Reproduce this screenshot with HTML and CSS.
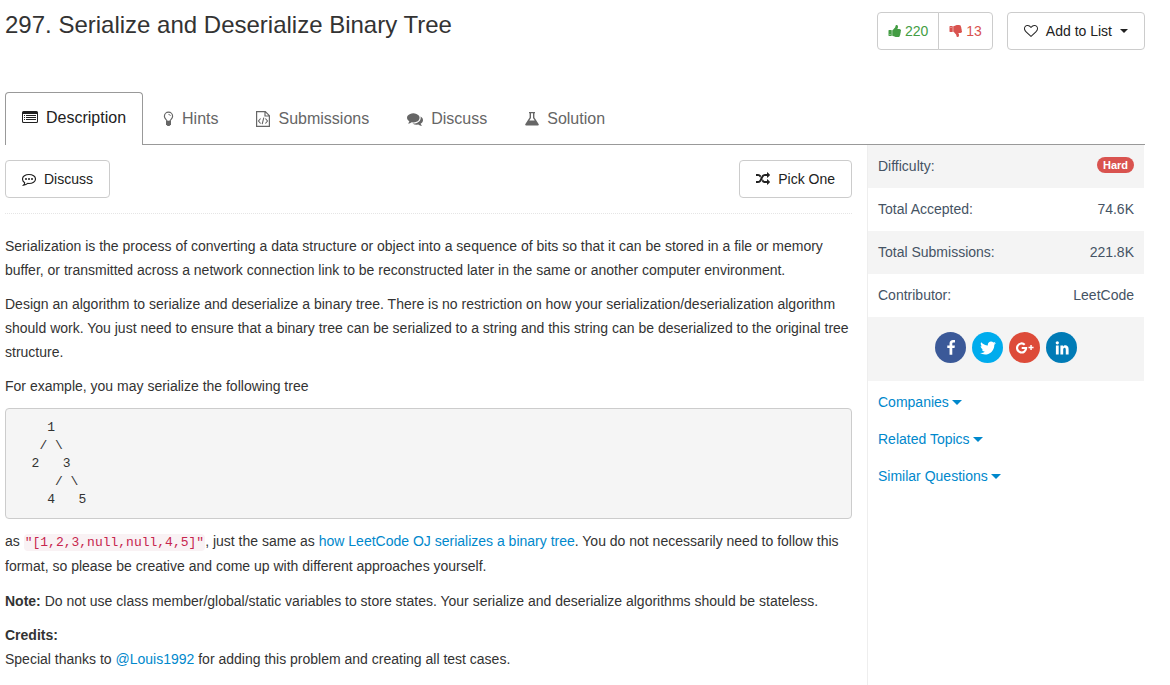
FILE: index.html
```html
<!DOCTYPE html>
<html lang="en">
<head>
<meta charset="utf-8">
<title>297. Serialize and Deserialize Binary Tree</title>
<link rel="stylesheet" href="styles.css">
</head>
<body>
<div class="page">
  <header class="header">
    <h1 class="title">297. Serialize and Deserialize Binary Tree</h1>
    <div class="actions">
      <div class="votes">
        <button type="button" class="vote vote-up"><svg class="thumb" viewBox="0 0 1792 1792"><path d="M320 1344q0-26-19-45t-45-19q-27 0-45.500 19t-18.500 45q0 27 18.500 45.500t45.500 18.500q26 0 45-18.500t19-45.500zm160-512v640q0 26-19 45t-45 19h-288q-26 0-45-19t-19-45v-640q0-26 19-45t45-19h288q26 0 45 19t19 45zm1184 0q0 86-55 149 15 44 15 76 3 76-43 137 17 56 0 117-15 57-54 94 9 112-49 181-64 76-197 78h-129q-66 0-144-15.500t-121.500-29-120.500-39.500q-123-43-158-44-26-1-45-19.500t-19-44.500v-641q0-25 18-43.500t43-20.500q24-2 76-59t101-121q68-87 101-120 18-18 31-48t17.500-48.500 13.500-60.500q7-39 12.500-61t19.500-52 34-50q19-19 45-19 46 0 82.500 10.500t60 26 40 40.500 24 45 12 50 5 45 .5 39q0 38-9.500 76t-19 60-27.500 56q-3 6-10 18t-11 22-8 24h277q78 0 135 57t57 135z"/></svg><span>220</span></button>
        <button type="button" class="vote vote-down"><svg class="thumb" viewBox="0 0 1792 1792"><path transform="matrix(1 0 0 -1 0 1792)" d="M320 1344q0-26-19-45t-45-19q-27 0-45.500 19t-18.500 45q0 27 18.500 45.500t45.500 18.500q26 0 45-18.500t19-45.500zm160-512v640q0 26-19 45t-45 19h-288q-26 0-45-19t-19-45v-640q0-26 19-45t45-19h288q26 0 45 19t19 45zm1184 0q0 86-55 149 15 44 15 76 3 76-43 137 17 56 0 117-15 57-54 94 9 112-49 181-64 76-197 78h-129q-66 0-144-15.500t-121.500-29-120.500-39.500q-123-43-158-44-26-1-45-19.500t-19-44.500v-641q0-25 18-43.500t43-20.500q24-2 76-59t101-121q68-87 101-120 18-18 31-48t17.500-48.500 13.500-60.500q7-39 12.500-61t19.500-52 34-50q19-19 45-19 46 0 82.500 10.500t60 26 40 40.500 24 45 12 50 5 45 .5 39q0 38-9.500 76t-19 60-27.500 56q-3 6-10 18t-11 22-8 24h277q78 0 135 57t57 135z"/></svg><span>13</span></button>
      </div>
      <button type="button" class="btn"><svg class="icon-sm" viewBox="0 0 1792 1792"><path d="M1664 596q0-81-21.500-143t-55-98.500-81.500-59.500-94-31-98-8-112 25.500-110.500 64-86.500 72-60 61.500q-18 22-49 22t-49-22q-24-28-60-61.500t-86.500-72-110.500-64-112-25.500-98 8-94 31-81.500 59.500-55 98.500-21.500 143q0 168 187 355l581 560 580-559q188-188 188-356zm128 0q0 221-229 450l-623 600q-18 18-44 18t-44-18l-624-602q-10-8-27.500-26t-55.500-65.500-68-97.500-53.500-121-23.500-138q0-220 127-344t351-124q62 0 126.500 21.500t120 58 95.500 68.500 76 68q36-36 76-68t95.500-68.500 120-58 126.500-21.500q224 0 351 124t127 344z"/></svg><span>Add to List</span><span class="caret"></span></button>
    </div>
  </header>

  <nav class="tabs">
    <a class="tab tab-active" href="#"><svg class="icon" viewBox="0 0 16 16"><path fill-rule="evenodd" d="M1.500 1h13A1.500 1.500 0 0 1 16 2.500v9a1.500 1.500 0 0 1-1.500 1.500h-13A1.500 1.500 0 0 1 0 11.500v-9A1.500 1.500 0 0 1 1.500 1zM1 4v7.500l.5.5h13l.5-.5V4z"/><path d="M2 5h1v1H2zM4 5h10v1H4zM2 7h1v1H2zM4 7h10v1H4zM2 9h1v1H2zM4 9h10v1H4z"/></svg><span>Description</span></a>
    <a class="tab" href="#"><svg class="icon-bulb" viewBox="0 0 11 16"><path fill="none" stroke="currentColor" stroke-width="1.200" d="M4 10.300C4 8.500 1.400 8 1.400 5.300a4.100 4.100 0 0 1 8.200 0C9.600 8 7 8.500 7 10.300"/><path fill="none" stroke="currentColor" d="M5.500 3.400c1 0 1.800.6 1.800 1.500"/><path d="M3 9.800h5v3.500L6.500 15h-2L3 13.300z"/></svg><span>Hints</span></a>
    <a class="tab" href="#"><svg class="icon-file" viewBox="1 0 14 16"><path fill="none" stroke="currentColor" stroke-width="1.200" d="M1.600.6h8.700l4.100 4.100v10.700H1.600zM10 .6V5h4.400"/><path fill="none" stroke="currentColor" stroke-width="1.100" d="M5.600 7.500 3.500 10l2.100 2.500M10.400 7.500l2.100 2.500-2.100 2.500M8.800 6.700l-1.600 6.500"/></svg><span>Submissions</span></a>
    <a class="tab" href="#"><svg class="icon" viewBox="0 0 1792 1792"><path d="M1408 768q0 139-94 257t-256.500 186.500-353.500 68.500q-86 0-176-16-124 88-278 128-36 9-86 16h-3q-11 0-20.500-8t-11.500-21q-1-3-1-6.500t.5-6.500 2-6l2.500-5 3.500-5.500 4-5 4.500-5 4-4.500q5-6 23-25t26-29.500 22.500-29 25-38.500 20.500-44q-124-72-195-177t-71-224q0-139 94-257t256.500-186.500 353.500-68.500 353.500 68.500 256.500 186.500 94 257zm384 256q0 120-71 224.500t-195 176.500q10 24 20.500 44t25 38.500 22.500 29 26 29.500 23 25q1 1 4 4.500t4.500 5 4 5 3.500 5.500l2.500 5 2 6 .5 6.500-1 6.500q-3 14-13 22t-22 7q-50-7-86-16-154-40-278-128-90 16-176 16-271 0-472-132 58 4 88 4 161 0 309-45t264-129q125-92 192-212t67-254q0-77-23-152 129 71 204 178t75 230z"/></svg><span>Discuss</span></a>
    <a class="tab" href="#"><svg class="icon-flask" viewBox="0 0 14 16"><path fill-rule="evenodd" d="M4 1h6v1.200H9.400v4.300l4.200 6.600c.5.900.1 1.400-.8 1.400H1.200c-.9 0-1.300-.5-.8-1.400l4.200-6.600V2.200H4zM6 2.200v4.700L4.300 9.600h5.400L8 6.900V2.200z"/></svg><span>Solution</span></a>
  </nav>

  <div class="columns">
    <main class="content">
      <div class="toolbar">
        <button type="button" class="btn"><svg class="icon-sm" viewBox="0 0 14 14"><path fill="none" stroke="currentColor" stroke-width="1.100" d="M7 2.500c3.600 0 6.500 2 6.500 4.500S10.600 11.500 7 11.500l-1.300-.1C4.500 12.500 3 13 1.500 13.200c.7-.7 1.100-1.500 1.200-2.500C1.300 9.800.5 8.500.5 7 .5 4.500 3.400 2.500 7 2.500z"/><circle cx="4" cy="7" r="1"/><circle cx="7" cy="7" r="1"/><circle cx="10" cy="7" r="1"/></svg><span>Discuss</span></button>
        <button type="button" class="btn"><svg class="icon-sm" viewBox="0 0 1792 1792"><path d="M666 481q-60 92-137 273-22-45-37-72.500t-40.500-63.500-51-56.500-63-35-81.500-14.500h-224q-14 0-23-9t-9-23v-192q0-14 9-23t23-9h224q250 0 410 225zm1126 799q0 14-9 23l-320 320q-9 9-23 9-13 0-22.500-9.500t-9.500-22.500v-192q-32 0-85 .5t-81 1-73-1-71-5-64-10.500-63-18.500-58-28.500-59-40-55-53.500-56-69.500q59-93 136-273 22 45 37 72.500t40.500 63.500 51 56.500 63 35 81.500 14.500h256v-192q0-14 9-23t23-9q12 0 24 10l319 319q9 9 9 23zm0-896q0 14-9 23l-320 320q-9 9-23 9-13 0-22.500-9.500t-9.500-22.500v-192h-256q-48 0-87 15t-69 45-51 61.500-45 77.500q-32 62-78 171-29 66-49.500 111t-54 105-64 100-74 83-90 68.500-106.500 42-128 16.500h-224q-14 0-23-9t-9-23v-192q0-14 9-23t23-9h224q48 0 87-15t69-45 51-61.500 45-77.500q32-62 78-171 29-66 49.500-111t54-105 64-100 74-83 90-68.500 106.500-42 128-16.500h256v-192q0-14 9-23t23-9q12 0 24 10l319 319q9 9 9 23z"/></svg><span>Pick One</span></button>
      </div>
      <article class="question">
        <p>Serialization is the process of converting a data structure or object into a sequence of bits so that it can be stored in a file or memory buffer, or transmitted across a network connection link to be reconstructed later in the same or another computer environment.</p>
        <p>Design an algorithm to serialize and deserialize a binary tree. There is no restriction on how your serialization/deserialization algorithm should work. You just need to ensure that a binary tree can be serialized to a string and this string can be deserialized to the original tree structure.</p>
        <p>For example, you may serialize the following tree</p>
<pre class="tree">
    1
   / \
  2   3
     / \
    4   5
</pre>
        <p class="with-code">as <code>"[1,2,3,null,null,4,5]"</code>, just the same as <a href="#">how LeetCode OJ serializes a binary tree</a>. You do not necessarily need to follow this format, so please be creative and come up with different approaches yourself.</p>
        <p><b>Note:</b> Do not use class member/global/static variables to store states. Your serialize and deserialize algorithms should be stateless.</p>
        <p><b>Credits:</b><br>Special thanks to <a href="#">@Louis1992</a> for adding this problem and creating all test cases.</p>
      </article>
    </main>

    <aside class="sidebar">
      <ul class="info">
        <li><span>Difficulty:</span><span class="badge">Hard</span></li>
        <li><span>Total Accepted:</span><span>74.6K</span></li>
        <li><span>Total Submissions:</span><span>221.8K</span></li>
        <li><span>Contributor:</span><span>LeetCode</span></li>
      </ul>
      <div class="social">
        <a class="share facebook" href="#" aria-label="Facebook"><svg class="icon" viewBox="0 0 1792 1792"><path d="M1343 12v264h-157q-86 0-116 36t-30 108v189h293l-39 296h-254v759h-306v-759h-255v-296h255v-218q0-186 104-288.500t277-102.500q147 0 228 12z"/></svg></a>
        <a class="share twitter" href="#" aria-label="Twitter"><svg class="icon-lg" viewBox="0 0 1792 1792"><path d="M1684 408q-67 98-162 167 1 14 1 42 0 130-38 259.500t-115.500 248.500-184.500 210.500-258 146-323 54.500q-271 0-496-145 35 4 78 4 225 0 401-138-105-2-188-64.500t-114-159.500q33 5 61 5 43 0 85-11-112-23-185.500-111.500t-73.500-205.500v-4q68 38 146 41-66-44-105-115t-39-154q0-88 44-163 121 149 294.500 238.500t371.500 99.500q-8-38-8-74 0-134 94.500-228.500t228.500-94.500q140 0 236 102 109-21 205-78-37 115-142 178 93-10 186-50z"/></svg></a>
        <a class="share google" href="#" aria-label="Google Plus"><svg class="icon-xl" viewBox="0 0 20 20"><path fill="none" stroke="currentColor" stroke-width="2.200" d="M9.700 6.700A4.500 4.500 0 1 0 11.100 10H6.700"/><path d="M15.300 7h1.500v1.800h1.800v1.500h-1.800v1.800h-1.500v-1.800h-1.800V8.800h1.800z"/></svg></a>
        <a class="share linkedin" href="#" aria-label="LinkedIn"><svg class="icon" viewBox="0 0 16 16"><circle cx="3.300" cy="2.800" r="1.600"/><path d="M1.900 5.500h2.800v9H1.900zM6.400 5.500H9v1.200c1.300-2.300 5.600-1.900 5.600 2.300v5.500h-2.800V9.700c0-2.700-2.600-2.500-2.600 0v4.800H6.400z"/></svg></a>
      </div>
      <div class="related">
        <a href="#">Companies<span class="caret caret-lg"></span></a>
        <a href="#">Related Topics<span class="caret caret-lg"></span></a>
        <a href="#">Similar Questions<span class="caret caret-lg"></span></a>
      </div>
    </aside>
  </div>
</div>
</body>
</html>
```

FILE: styles.css
```css
* { box-sizing: border-box; }

body {
  margin: 0;
  background: #fff;
  color: #333;
  font: 14px/24px "Liberation Sans", Arial, sans-serif;
}

a { color: #0088cc; text-decoration: none; }
svg { display: block; flex: none; fill: currentColor; }

.page {
  display: flex;
  flex-direction: column;
  min-height: 100vh;
  padding: 0 25px 0 5px;
}

.header {
  display: flex;
  justify-content: space-between;
  align-items: flex-start;
  padding: 12px 0 42px;
}

.title {
  margin: 0;
  font-size: 24px;
  font-weight: 400;
  line-height: 26px;
}

.actions { display: flex; gap: 14px; }
.votes { display: flex; }

.btn,
.vote {
  display: flex;
  align-items: center;
  height: 38px;
  border: 1px solid #ccc;
  border-radius: 4px;
  background: #fff;
  color: #212121;
  font: inherit;
  cursor: pointer;
}

.btn { gap: 8px; padding: 0 16px; }
.vote { gap: 3px; padding: 0 10px; }
.vote-up { border-radius: 4px 0 0 4px; color: #449d44; }
.vote-down { margin-left: -1px; border-radius: 0 4px 4px 0; color: #d9534f; }

.thumb,
.icon-sm { width: 14px; height: 14px; }
.icon { width: 16px; height: 16px; }
.icon-bulb { width: 11px; height: 16px; }
.icon-file,
.icon-flask { width: 14px; height: 16px; }
.icon-lg { width: 18px; height: 18px; }
.icon-xl { width: 20px; height: 20px; }

.caret {
  display: inline-block;
  border: 4px solid transparent;
  border-top-color: currentColor;
  border-bottom: 0;
}

.caret-lg { border-width: 5px 5px 0; }

.tabs {
  display: flex;
  gap: 2px;
  border-bottom: 1px solid #999;
}

.tab {
  display: flex;
  align-items: center;
  gap: 8px;
  height: 52px;
  padding: 1px 18px 0;
  color: #666;
  font-size: 16px;
}

.tab-active {
  height: 53px;
  margin-bottom: -1px;
  padding: 0 16px 2px;
  border: 1px solid #999;
  border-bottom: 0;
  border-radius: 4px 4px 0 0;
  background: #fff;
  color: #212121;
}

.columns {
  display: grid;
  flex: 1;
  grid-template-columns: minmax(0, 1fr) 278px;
  gap: 15px;
}

.toolbar {
  display: flex;
  justify-content: space-between;
  padding: 15px 0;
  border-bottom: 1px dotted #e5e5e5;
}

.question { padding-top: 20px; }
.question p { margin: 0 0 10px; }
.question .with-code { line-height: 25px; }

.tree {
  margin: 0 0 10px;
  padding: 10px 10px 9px;
  border: 1px solid #ccc;
  border-radius: 4px;
  background: #f5f5f5;
  font: 13px/18px "Liberation Mono", monospace;
}

code {
  padding: 1px;
  border-radius: 4px;
  background: #f9f2f4;
  color: #c7254e;
  font: 13px "Liberation Mono", monospace;
}

.sidebar {
  padding-right: 1px;
  border-left: 1px solid #eee;
  color: #455364;
}

.info { margin: 0; padding: 0; list-style: none; }

.info li {
  display: flex;
  justify-content: space-between;
  height: 43px;
  padding: 9px 10px;
}

.info li:nth-child(odd) { background: #f4f4f4; }

.badge {
  height: 16px;
  margin-top: 3px;
  padding: 0 6px;
  border-radius: 8px;
  background: #d9534f;
  color: #fff;
  font-size: 11px;
  font-weight: 700;
  line-height: 16px;
}

.social {
  display: flex;
  justify-content: center;
  gap: 6px;
  padding: 15px 0 18px;
  background: #f4f4f4;
}

.share {
  display: grid;
  place-items: center;
  width: 31px;
  height: 31px;
  border-radius: 50%;
  color: #fff;
}

.facebook { background: #3b5998; }
.twitter { background: #00aced; }
.google { background: #dd4b39; }
.linkedin { background: #007bb6; }

.related {
  display: flex;
  flex-direction: column;
  align-items: flex-start;
  gap: 13px;
  padding: 9px 10px;
}

.related a { display: flex; align-items: center; gap: 3px; }
```
